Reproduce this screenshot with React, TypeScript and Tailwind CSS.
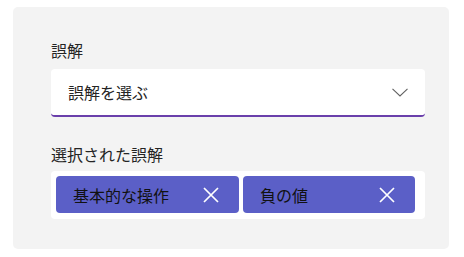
const selected = [
    { id: 'basic-ops', label: '基本的な操作', width: 'w-[183px]' },
    { id: 'negative', label: '負の値', width: 'w-[172px]' },
];

export default function App() {
    return (
        <main
            className="w-[464px] h-[257px] bg-white pt-[7px] pl-[13px]"
            style={{ fontFamily: '"Noto Sans CJK JP", "Noto Sans", sans-serif' }}
        >
            <div className="w-[436px] h-[242px] bg-[#f3f3f3] rounded-[5px] pt-[32px] px-[38px] text-[#242424]">
                <div className="text-[16px] leading-[22px]">誤解</div>

                <button className="mt-[8px] w-[374px] h-[48px] bg-white rounded-[4px] border-b-2 border-[#6a3fab] flex items-center justify-between pl-[17px] pr-[17px] text-[16px] text-[#242424]">
                    <span>誤解を選ぶ</span>
                    {/* thin chevron */}
                    <svg width="16" height="9" viewBox="0 0 16 9" fill="none" className="mt-[1px]">
                        <path d="M0.5 0.8 L8 8 L15.5 0.8" stroke="#616161" strokeWidth="1.1" />
                    </svg>
                </button>

                <div className="mt-[26px] text-[16px] leading-[22px]">選択された誤解</div>

                <div className="mt-[6px] w-[374px] h-[48px] bg-white rounded-[4px] p-[5px] flex gap-[4px]">
                    {selected.map((item) => (
                        <div
                            key={item.id}
                            className={`${item.width} h-[37px] bg-[#5b5fc7] rounded-[4px] flex items-center justify-between pl-[17px] pr-[20px]`}
                        >
                            <span className="text-[16px] text-[#111111]">{item.label}</span>
                            <svg width="16" height="16" viewBox="0 0 16 16" fill="none">
                                <path d="M1 1 L15 15 M15 1 L1 15" stroke="white" strokeWidth="1.7" />
                            </svg>
                        </div>
                    ))}
                </div>
            </div>
        </main>
    );
}
